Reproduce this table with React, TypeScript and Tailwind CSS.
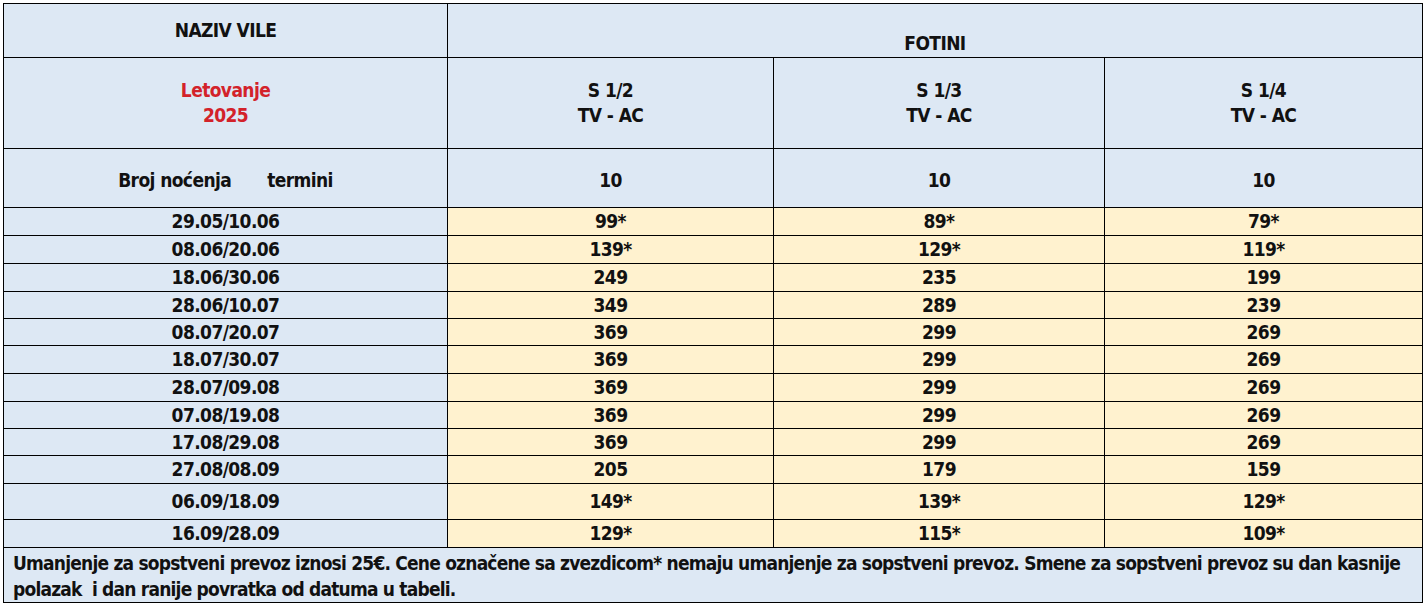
const font = { fontFamily: "'Liberation Sans Narrow', 'DejaVu Sans Condensed', 'Liberation Sans', sans-serif" }

type Row = { termin: string; prices: [string, string, string]; h: string }

const ROWS: Row[] = [
  { termin: '29.05/10.06', prices: ['99*', '89*', '79*'], h: 'h-[28px]' },
  { termin: '08.06/20.06', prices: ['139*', '129*', '119*'], h: 'h-[28px]' },
  { termin: '18.06/30.06', prices: ['249', '235', '199'], h: 'h-[28px]' },
  { termin: '28.06/10.07', prices: ['349', '289', '239'], h: 'h-[27px]' },
  { termin: '08.07/20.07', prices: ['369', '299', '269'], h: 'h-[27px]' },
  { termin: '18.07/30.07', prices: ['369', '299', '269'], h: 'h-[28px]' },
  { termin: '28.07/09.08', prices: ['369', '299', '269'], h: 'h-[28px]' },
  { termin: '07.08/19.08', prices: ['369', '299', '269'], h: 'h-[27px]' },
  { termin: '17.08/29.08', prices: ['369', '299', '269'], h: 'h-[27px]' },
  { termin: '27.08/08.09', prices: ['205', '179', '159'], h: 'h-[28px]' },
  { termin: '06.09/18.09', prices: ['149*', '139*', '129*'], h: 'h-[36px]' },
  { termin: '16.09/28.09', prices: ['129*', '115*', '109*'], h: 'h-[28px]' },
]

const ROOMS = ['S 1/2', 'S 1/3', 'S 1/4']

const cell = 'border border-black text-center align-middle p-0'

export default function App() {
  return (
    <div
      className="w-[1425px] h-[606px] bg-white p-[3px] text-[#111] text-[19px] tracking-[-0.6px] font-bold leading-[25px]"
      style={font}
    >
      <table className="w-[1419px] table-fixed border-collapse">
        <colgroup>
          <col className="w-[444px]" />
          <col className="w-[326px]" />
          <col className="w-[331px]" />
          <col className="w-[318px]" />
        </colgroup>
        <tbody>
          <tr className="h-[54px] bg-[#dde8f4]">
            <td className={cell}>NAZIV VILE</td>
            <td colSpan={3} className="border border-black text-center align-bottom pb-[1px]">
              FOTINI
            </td>
          </tr>
          <tr className="h-[91px] bg-[#dde8f4]">
            <td className={`${cell} text-[#d3222a]`}>
              Letovanje
              <br />
              2025
            </td>
            {ROOMS.map((room) => (
              <td key={room} className={cell}>
                {room}
                <br />
                TV - AC
              </td>
            ))}
          </tr>
          <tr className="h-[59px] bg-[#dde8f4]">
            <td className={`${cell} pt-[4px]`}>
              <span>Broj noćenja</span>
              <span className="inline-block w-[36px]" />
              <span>termini</span>
            </td>
            <td className={`${cell} pt-[4px]`}>10</td>
            <td className={`${cell} pt-[4px]`}>10</td>
            <td className={`${cell} pt-[4px]`}>10</td>
          </tr>

          {ROWS.map((row) => (
            <tr key={row.termin} className={row.h}>
              <td className={`${cell} bg-[#dde8f4]`}>{row.termin}</td>
              {row.prices.map((p, i) => (
                <td key={i} className={`${cell} bg-[#fff2cf]`}>
                  {p}
                </td>
              ))}
            </tr>
          ))}

          <tr className="h-[55px] bg-[#dde8f4]">
            <td
              colSpan={4}
              className="border border-black text-left align-top pl-[9px] pr-0 pt-[2px] pb-0 leading-[26px] tracking-[-0.8px]"
            >
              Umanjenje za sopstveni prevoz iznosi 25€. Cene označene sa zvezdicom* nemaju umanjenje za sopstveni
              prevoz. Smene za sopstveni prevoz su dan kasnije polazak&nbsp; i dan ranije povratka od datuma u tabeli.
            </td>
          </tr>
        </tbody>
      </table>
    </div>
  )
}
